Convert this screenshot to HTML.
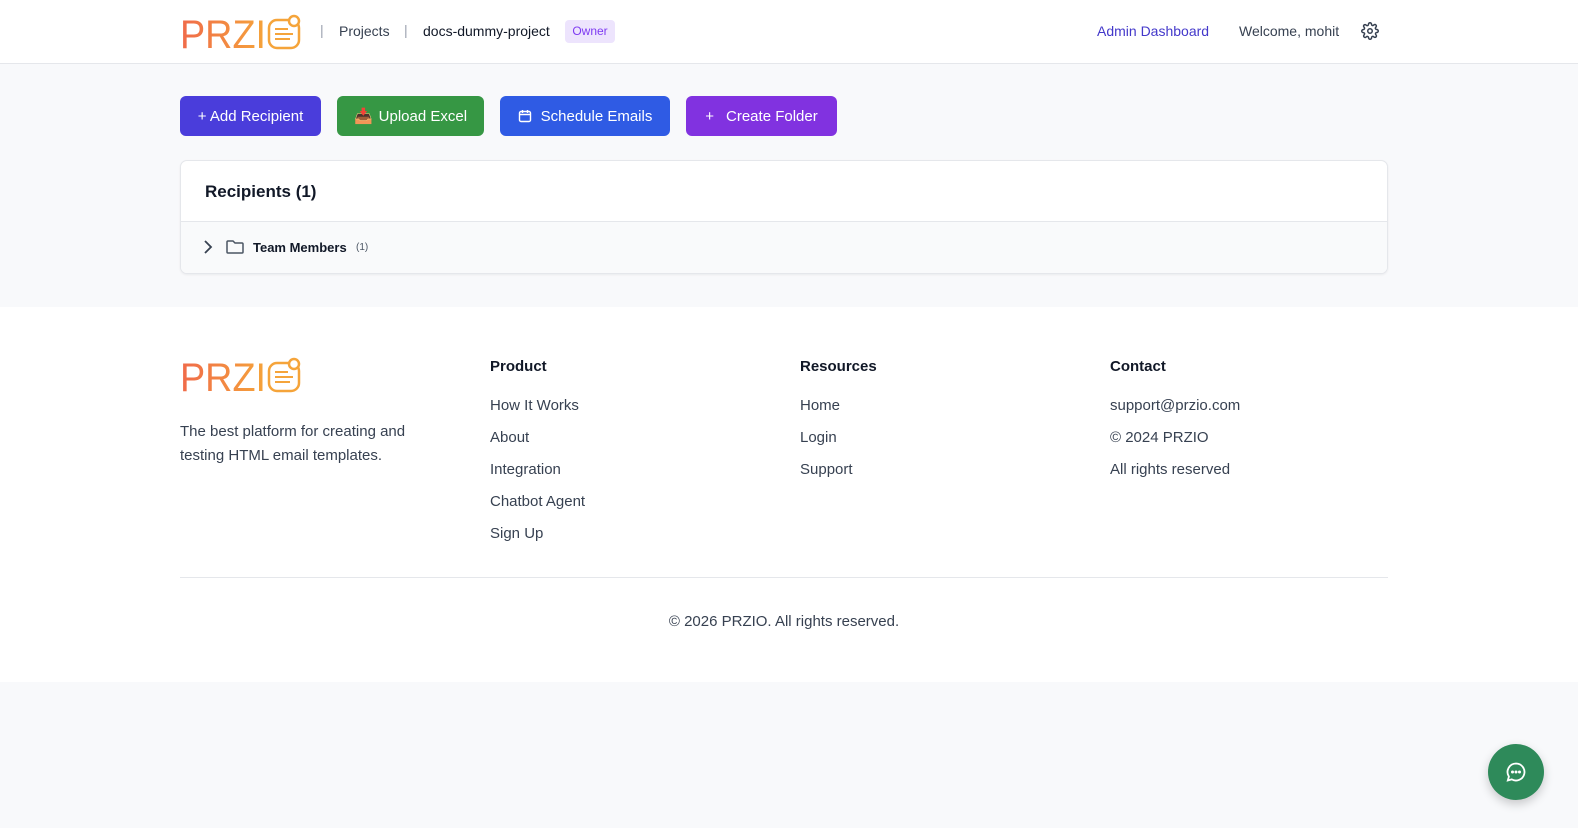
<!DOCTYPE html>
<html><head><meta charset="utf-8"><style>
*{box-sizing:border-box;margin:0;padding:0}
body{width:1578px;height:828px;background:#f8f9fb;font-family:"Liberation Sans",sans-serif;color:#111827;position:relative;overflow:hidden}
.hdr{position:absolute;left:0;top:0;width:1578px;height:64px;background:#fff;border-bottom:1px solid #e5e7eb}
.abs{position:absolute;white-space:nowrap}
.btn{position:absolute;top:96px;height:40px;border-radius:6px;color:#fff;font-size:15px;display:flex;align-items:center;justify-content:center;gap:6px}
.card{position:absolute;left:180px;top:160px;width:1208px;height:114px;background:#fff;border:1px solid #e5e7eb;border-radius:7px;box-shadow:0 1px 2px rgba(0,0,0,.06);overflow:hidden}
.foot{position:absolute;left:0;top:307px;width:1578px;height:375px;background:#fff}
.h{font-size:15px;font-weight:bold;color:#111827}
.l{font-size:15px;color:#374151}
</style></head><body>
<div class="hdr">
<svg class="abs" style="left:180px;top:13px" width="124" height="38" viewBox="0 0 124 38">
<defs><linearGradient id="g" x1="0" x2="1"><stop offset="0" stop-color="#f06a4a"/><stop offset="1" stop-color="#f5a43a"/></linearGradient></defs>
<text x="0" y="35" font-family="Liberation Sans" font-size="40" fill="url(#g)" textLength="86" lengthAdjust="spacingAndGlyphs">PRZI</text>
<rect x="89" y="7" width="30" height="28" rx="8" fill="none" stroke="#f5a43a" stroke-width="2.5"/>
<circle cx="114" cy="8" r="5" fill="#fff" stroke="#f5a43a" stroke-width="2.5"/>
<line x1="95" y1="16" x2="108" y2="16" stroke="#f5a43a" stroke-width="2"/><line x1="95" y1="21" x2="113" y2="21" stroke="#f5a43a" stroke-width="2"/><line x1="95" y1="26" x2="110" y2="26" stroke="#f5a43a" stroke-width="2"/>
</svg>
<div class="abs" style="left:320px;top:22px;color:#9ca3af;font-size:14px">|</div>
<div class="abs" style="left:339px;top:23px;color:#374151;font-size:14px">Projects</div>
<div class="abs" style="left:404px;top:22px;color:#9ca3af;font-size:14px">|</div>
<div class="abs" style="left:423px;top:23px;color:#111827;font-size:14px">docs-dummy-project</div>
<div class="abs" style="left:565px;top:20px;width:50px;height:23px;background:#ede4fd;border-radius:4px;color:#7e3af2;font-size:12px;text-align:center;line-height:23px">Owner</div>
<div class="abs" style="left:1097px;top:23px;color:#4338ca;font-size:14px">Admin Dashboard</div>
<div class="abs" style="left:1239px;top:23px;color:#374151;font-size:14px">Welcome, mohit</div>
<svg class="abs" style="left:1361px;top:22px" width="18" height="18" viewBox="0 0 24 24" fill="none" stroke="#374151" stroke-width="2"><circle cx="12" cy="12" r="3"/><path d="M19.4 15a1.7 1.7 0 0 0 .3 1.8l.1.1a2 2 0 1 1-2.8 2.8l-.1-.1a1.7 1.7 0 0 0-1.8-.3 1.7 1.7 0 0 0-1 1.5V21a2 2 0 1 1-4 0v-.1a1.7 1.7 0 0 0-1.1-1.5 1.7 1.7 0 0 0-1.8.3l-.1.1a2 2 0 1 1-2.8-2.8l.1-.1a1.7 1.7 0 0 0 .3-1.8 1.7 1.7 0 0 0-1.5-1H3a2 2 0 1 1 0-4h.1a1.7 1.7 0 0 0 1.5-1.1 1.7 1.7 0 0 0-.3-1.8l-.1-.1a2 2 0 1 1 2.8-2.8l.1.1a1.7 1.7 0 0 0 1.8.3H9a1.7 1.7 0 0 0 1-1.5V3a2 2 0 1 1 4 0v.1a1.7 1.7 0 0 0 1 1.5 1.7 1.7 0 0 0 1.8-.3l.1-.1a2 2 0 1 1 2.8 2.8l-.1.1a1.7 1.7 0 0 0-.3 1.8V9a1.7 1.7 0 0 0 1.5 1H21a2 2 0 1 1 0 4h-.1a1.7 1.7 0 0 0-1.5 1z"/></svg>
</div>

<div class="btn" style="left:180px;width:141px;background:#4a3ddb">+ Add Recipient</div>
<div class="btn" style="left:337px;width:147px;background:#369744"><span style="font-size:15px">📥</span>Upload Excel</div>
<div class="btn" style="left:500px;width:170px;background:#2f5be4;gap:9px"><svg width="14" height="14" viewBox="0 0 14 14" fill="none" stroke="#fff" stroke-width="1.4"><rect x="1.5" y="2.5" width="11" height="10" rx="1.5"/><path d="M1.5 5.5h11M4.5 1v3M9.5 1v3"/></svg>Schedule Emails</div>
<div class="btn" style="left:686px;width:151px;background:#8132e0;gap:12px">+ <span>Create Folder</span></div>

<div class="card">
<div class="abs" style="left:24px;top:21px;font-size:17px;font-weight:bold">Recipients (1)</div>
<div class="abs" style="left:0;top:60px;width:1208px;height:54px;background:#f9fafb;border-top:1px solid #e5e7eb"></div>
<svg class="abs" style="left:20px;top:78px" width="14" height="16" viewBox="0 0 14 16" fill="none" stroke="#374151" stroke-width="1.8"><path d="M4 2l6 6-6 6"/></svg>
<svg class="abs" style="left:44px;top:78px" width="20" height="16" viewBox="0 0 20 16" fill="none" stroke="#4b5563" stroke-width="1.5"><path d="M2 3a1 1 0 0 1 1-1h5l2 2h7a1 1 0 0 1 1 1v8a1 1 0 0 1-1 1H3a1 1 0 0 1-1-1z"/></svg>
<div class="abs" style="left:72px;top:79px;font-size:13px;font-weight:bold">Team Members</div>
<div class="abs" style="left:175px;top:81px;font-size:10px;color:#4b5563">(1)</div>
</div>

<div class="foot">
<svg class="abs" style="left:180px;top:49px" width="124" height="38" viewBox="0 0 124 38">
<text x="0" y="35" font-family="Liberation Sans" font-size="40" fill="url(#g)" textLength="86" lengthAdjust="spacingAndGlyphs">PRZI</text>
<rect x="89" y="7" width="30" height="28" rx="8" fill="none" stroke="#f5a43a" stroke-width="2.5"/>
<circle cx="114" cy="8" r="5" fill="#fff" stroke="#f5a43a" stroke-width="2.5"/>
<line x1="95" y1="16" x2="108" y2="16" stroke="#f5a43a" stroke-width="2"/><line x1="95" y1="21" x2="113" y2="21" stroke="#f5a43a" stroke-width="2"/><line x1="95" y1="26" x2="110" y2="26" stroke="#f5a43a" stroke-width="2"/>
</svg>
<div class="abs l" style="left:180px;top:113px;line-height:24px">The best platform for creating and<br>testing HTML email templates.</div>
<div class="abs h" style="left:490px;top:51px">Product</div>
<div class="abs l" style="left:490px;top:90px">How It Works</div>
<div class="abs l" style="left:490px;top:122px">About</div>
<div class="abs l" style="left:490px;top:154px">Integration</div>
<div class="abs l" style="left:490px;top:186px">Chatbot Agent</div>
<div class="abs l" style="left:490px;top:218px">Sign Up</div>
<div class="abs h" style="left:800px;top:51px">Resources</div>
<div class="abs l" style="left:800px;top:90px">Home</div>
<div class="abs l" style="left:800px;top:122px">Login</div>
<div class="abs l" style="left:800px;top:154px">Support</div>
<div class="abs h" style="left:1110px;top:51px">Contact</div>
<div class="abs l" style="left:1110px;top:90px">support@przio.com</div>
<div class="abs l" style="left:1110px;top:122px">© 2024 PRZIO</div>
<div class="abs l" style="left:1110px;top:154px">All rights reserved</div>
<div class="abs" style="left:180px;top:270px;width:1208px;border-top:1px solid #e5e7eb"></div>
<div class="abs l" style="left:0;width:1568px;text-align:center;top:306px">© 2026 PRZIO. All rights reserved.</div>
</div>

<div class="abs" style="left:1488px;top:744px;width:56px;height:56px;border-radius:50%;background:#2e8a5a;box-shadow:0 4px 10px rgba(0,0,0,.2)"></div>
<svg class="abs" style="left:1504px;top:760px" width="24" height="24" viewBox="0 0 24 24" fill="none" stroke="#fff" stroke-width="1.8"><path d="M12 3.5a8.5 8.5 0 1 1-4.2 15.9L3.8 20.5l1.1-3.9A8.5 8.5 0 0 1 12 3.5z"/><circle cx="8.5" cy="12" r=".6" fill="#fff"/><circle cx="12" cy="12" r=".6" fill="#fff"/><circle cx="15.5" cy="12" r=".6" fill="#fff"/></svg>
</body></html>
